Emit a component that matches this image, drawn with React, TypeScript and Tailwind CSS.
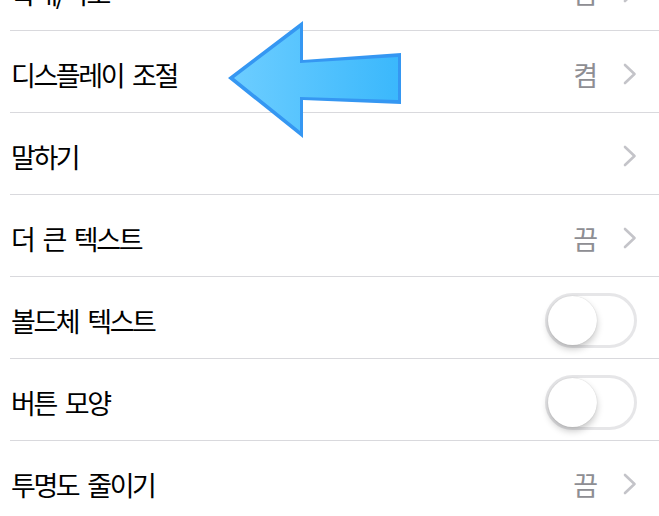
import React from 'react';

type Row = {
    label: string;
    value?: string;
    kind: 'link' | 'toggle';
};

const rows: Row[] = [
    { label: '확대/축소', value: '끔', kind: 'link' },
    { label: '디스플레이 조절', value: '켬', kind: 'link' },
    { label: '말하기', kind: 'link' },
    { label: '더 큰 텍스트', value: '끔', kind: 'link' },
    { label: '볼드체 텍스트', kind: 'toggle' },
    { label: '버튼 모양', kind: 'toggle' },
    { label: '투명도 줄이기', value: '끔', kind: 'link' },
];

const Chevron = () => (
    <svg width="16" height="22" viewBox="0 0 16 22" className="ml-[24px] mr-[21px]">
        <path d="M3 2 L12.5 11 L3 20" fill="none" stroke="#c4c4c9" strokeWidth="2.6" strokeLinecap="round" strokeLinejoin="round" />
    </svg>
);

const Toggle = () => (
    <div className="relative mr-[22px] h-[55px] w-[92px] rounded-full border-[3px] border-[#e6e6e8] bg-white">
        <div className="absolute left-[0px] top-[0px] h-[49px] w-[49px] rounded-full bg-white shadow-[0_4px_7px_rgba(0,0,0,0.22),0_0_1px_rgba(0,0,0,0.2)]" />
    </div>
);

const Arrow = () => (
    <svg className="pointer-events-none absolute left-0 top-0" width="659" height="516" viewBox="0 0 659 516">
        <defs>
            <linearGradient id="arrowFill" x1="0" y1="0" x2="1" y2="0">
                <stop offset="0" stopColor="#6ccdff" />
                <stop offset="1" stopColor="#3bb8fc" />
            </linearGradient>
        </defs>
        <path
            d="M228 78 L303 21 L303 60 L401 53 L401 104 L303 100 L303 138 Z"
            fill="#3597f2"
        />
        <path
            d="M234 78 L300 28 L300 63 L398 57 L398 100 L300 97 L300 131 Z"
            fill="url(#arrowFill)"
        />
    </svg>
);

export default function App() {
    return (
        <div
            className="relative h-[516px] w-[659px] overflow-hidden bg-white"
            style={{ fontFamily: '"Noto Sans CJK KR", "Noto Sans", sans-serif' }}
        >
            <div className="-mt-[51px] pl-[10px]">
                {rows.map((row) => (
                    <div
                        key={row.label}
                        className="box-border flex h-[82px] items-center border-b border-[#d9d9dd] pt-[5px]"
                    >
                        <span className="ml-[1px] flex-1 text-[27px] leading-none tracking-[-0.09em] [word-spacing:0.2em] text-black">
                            {row.label}
                        </span>
                        {row.kind === 'link' ? (
                            <div className="flex items-center">
                                {row.value && (
                                    <span className="text-[27px] leading-none text-[#8e8e93]">{row.value}</span>
                                )}
                                <Chevron />
                            </div>
                        ) : (
                            <Toggle />
                        )}
                    </div>
                ))}
            </div>
            <Arrow />
        </div>
    );
}
